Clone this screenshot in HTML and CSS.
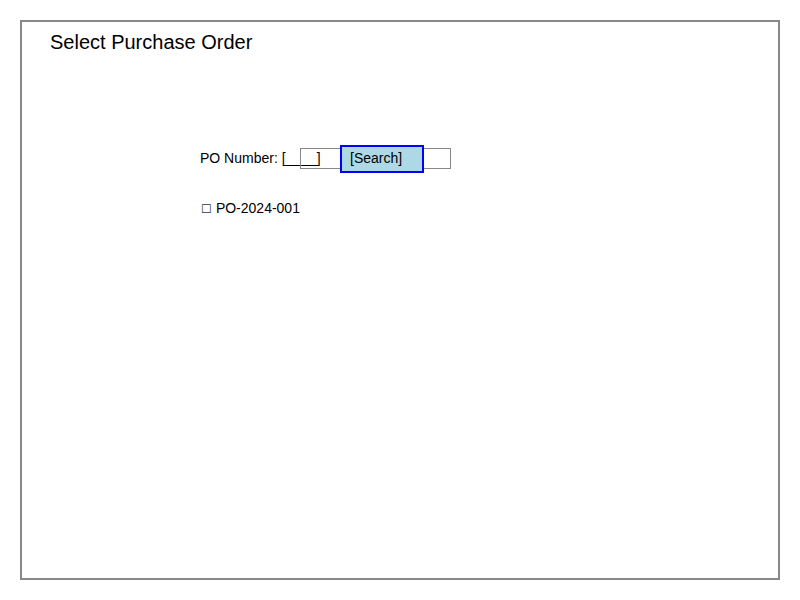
FILE: index.html
```html
<!DOCTYPE html>
<html>
<head>
<meta charset="utf-8">
<link rel="stylesheet" href="styles.css">
</head>
<body>
<div class="frame">
  <h1 class="title">Select Purchase Order</h1>
  <div class="content">
    <div class="search-row">
      <span class="label">PO Number: [____]</span>
      <span class="input"></span>
      <span class="button">[Search]</span>
    </div>
    <div class="result"><span class="check">☐</span> PO-2024-001</div>
  </div>
</div>
</body>
</html>
```
FILE: styles.css
```css
html, body {
  margin: 0;
  padding: 0;
  background: #ffffff;
}
body {
  font-family: "Liberation Sans", Arial, sans-serif;
  color: #000;
}
.frame {
  box-sizing: border-box;
  margin: 20px;
  width: 760px;
  height: 560px;
  border: 2px solid #888888;
  padding: 0 0 0 28px;
}
.title {
  margin: 0;
  padding-top: 8px;
  font-size: 20px;
  line-height: 24px;
  font-weight: normal;
}
.content {
  padding-left: 150px;
  padding-top: 91px;
}
.search-row {
  display: grid;
  grid-template-columns: auto;
  justify-items: start;
  align-items: start;
  height: 28px;
}
.search-row > * {
  grid-row: 1;
  grid-column: 1;
}
.label {
  font-size: 14px;
  line-height: 16px;
  margin-top: 5px;
}
.input {
  box-sizing: border-box;
  margin-left: 100px;
  margin-top: 3px;
  width: 151px;
  height: 21px;
  border: 1px solid #888888;
  background: transparent;
}
.button {
  box-sizing: border-box;
  margin-left: 140px;
  width: 84px;
  height: 28px;
  border: 2px solid #0000ff;
  background: #add8e6;
  font-size: 14px;
  line-height: 23px;
  padding-left: 8px;
}
.result {
  margin-top: 27px;
  padding-left: 1px;
  font-size: 14px;
  line-height: 16px;
}
.check {
  font-size: 12px;
  color: #333;
}
```
